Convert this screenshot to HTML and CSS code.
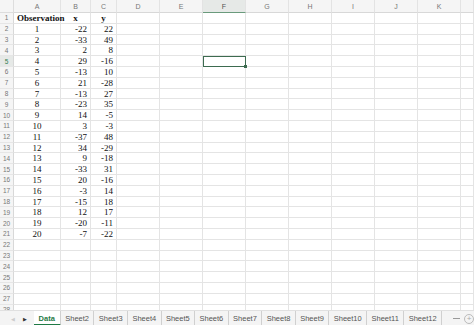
FILE: index.html
```html
<!DOCTYPE html>
<html lang="en">

<head>
    <meta charset="UTF-8">
    <meta name="viewport" content="width=device-width, initial-scale=1.0">
    <title>Data</title>
    <link rel="stylesheet" href="styles.css">
</head>

<body>
    <div class="sheet" id="sheet">
        <!-- cells are added by the script below -->
    </div>

    <div class="tabbar">
        <div class="nav">
            <span class="arrow left">&#9664;</span>
            <span class="arrow right">&#9654;</span>
        </div>
        <div class="tabs">
            <span class="tab active">Data</span>
            <span class="tab">Sheet2</span>
            <span class="tab">Sheet3</span>
            <span class="tab">Sheet4</span>
            <span class="tab">Sheet5</span>
            <span class="tab">Sheet6</span>
            <span class="tab">Sheet7</span>
            <span class="tab">Sheet8</span>
            <span class="tab">Sheet9</span>
            <span class="tab">Sheet10</span>
            <span class="tab">Sheet11</span>
            <span class="tab">Sheet12</span>
        </div>
        <div class="tools">
            <span class="dash"></span>
            <span class="plus">+</span>
        </div>
    </div>

    <script>
        const cols = ['A', 'B', 'C', 'D', 'E', 'F', 'G', 'H', 'I', 'J', 'K', ''];
        const data = [
            [1, -22, 22], [2, -33, 49], [3, 2, 8], [4, 29, -16], [5, -13, 10],
            [6, 21, -28], [7, -13, 27], [8, -23, 35], [9, 14, -5], [10, 3, -3],
            [11, -37, 48], [12, 34, -29], [13, 9, -18], [14, -33, 31], [15, 20, -16],
            [16, -3, 14], [17, -15, 18], [18, 12, 17], [19, -20, -11], [20, -7, -22]
        ];
        const sheet = document.getElementById('sheet');

        function cell(cls, text) {
            const div = document.createElement('div');
            div.className = cls;
            div.textContent = text;
            sheet.appendChild(div);
            return div;
        }

        // column headers
        cell('corner', '');
        cols.forEach(c => cell(c === 'F' ? 'colhead sel' : 'colhead', c));

        // rows
        for (let r = 1; r <= 28; r++) {
            cell(r === 5 ? 'rowhead sel' : 'rowhead', r);
            cols.forEach((c, i) => {
                let text = '';
                let cls = 'cell';
                if (r === 1 && i === 0) { text = 'Observation'; cls += ' head'; }
                else if (r === 1 && i === 1) { text = 'x'; cls += ' head'; }
                else if (r === 1 && i === 2) { text = 'y'; cls += ' head'; }
                else if (r > 1 && r <= 21 && i < 3) {
                    text = data[r - 2][i];
                    cls += i === 0 ? ' center' : ' num';
                }
                if (r === 5 && c === 'F') cls += ' active';
                cell(cls, text);
            });
        }
    </script>
</body>

</html>
```

FILE: styles.css
```css
body {
    margin: 0;
    padding: 0;
    background-color: #fff;
    font-family: "Liberation Serif", serif;
    overflow: hidden;
    width: 474px;
    height: 325px;
}

.sheet {
    display: grid;
    grid-template-columns: 14px 47px 30px 26px 43px 43px 43px 43px 43px 43px 43px 43px 13px;
    grid-template-rows: 13px repeat(28, 10.8px);
    height: 310px;
    overflow: hidden;
}

.corner,
.colhead,
.rowhead {
    background-color: #f5f5f5;
    color: #777;
    font-family: "Liberation Sans", sans-serif;
    font-size: 7px;
    display: flex;
    align-items: center;
    justify-content: center;
    box-sizing: border-box;
}

.corner {
    border-right: 1px solid #ddd;
    border-bottom: 1px solid #ddd;
}

.colhead {
    border-right: 1px solid #e3e3e3;
    border-bottom: 1px solid #d8d8d8;
}

.colhead.sel {
    background-color: #e6e9e7;
    color: #555;
    border-bottom: 1px solid #6a9a7c;
}

.rowhead {
    border-right: 1px solid #d8d8d8;
    border-bottom: 1px solid #e6e6e6;
    font-size: 6.5px;
}

.rowhead.sel {
    background-color: #e6e9e7;
    color: #2e7d4f;
}

.cell {
    border-right: 1px solid #e4e4e4;
    border-bottom: 1px solid #e4e4e4;
    box-sizing: border-box;
    font-size: 9px;
    line-height: 10px;
    color: #111;
    padding: 0 3px;
    white-space: nowrap;
    overflow: visible;
}

.cell.head {
    font-weight: bold;
    text-align: center;
}

.cell.center {
    text-align: center;
}

.cell.num {
    text-align: right;
}

.cell.active {
    border: 1px solid #3d6b50;
    position: relative;
}

.cell.active::after {
    content: "";
    position: absolute;
    right: -2px;
    bottom: -2px;
    width: 3px;
    height: 3px;
    background-color: #3d6b50;
}

.tabbar {
    display: flex;
    align-items: center;
    height: 15px;
    background-color: #f4f4f4;
    border-top: 1px solid #e0e0e0;
    font-family: "Liberation Sans", sans-serif;
    font-size: 7.5px;
    color: #555;
}

.nav {
    display: flex;
    width: 43px;
    gap: 8px;
    padding-left: 11px;
    box-sizing: border-box;
}

.arrow {
    font-size: 5px;
}

.arrow.left {
    color: #ccc;
}

.arrow.right {
    color: #333;
}

.tabs {
    display: flex;
    align-items: center;
    height: 100%;
}

.tab {
    display: flex;
    align-items: center;
    height: 100%;
    padding: 0 4.4px;
    border-right: 1px solid #d0d0d0;
    box-sizing: border-box;
}

.tab.active {
    background-color: #fff;
    color: #1f7a45;
    font-weight: bold;
    border-bottom: 2px solid #1f7a45;
    padding: 2px 5px 0 5px;
}

.tools {
    display: flex;
    align-items: center;
    gap: 4px;
    margin-left: 11px;
}

.dash {
    width: 7px;
    height: 1px;
    background-color: #999;
}

.plus {
    width: 8px;
    height: 8px;
    border: 1px solid #bbb;
    border-radius: 50%;
    color: #aaa;
    font-size: 8px;
    line-height: 8px;
    text-align: center;
}
```
